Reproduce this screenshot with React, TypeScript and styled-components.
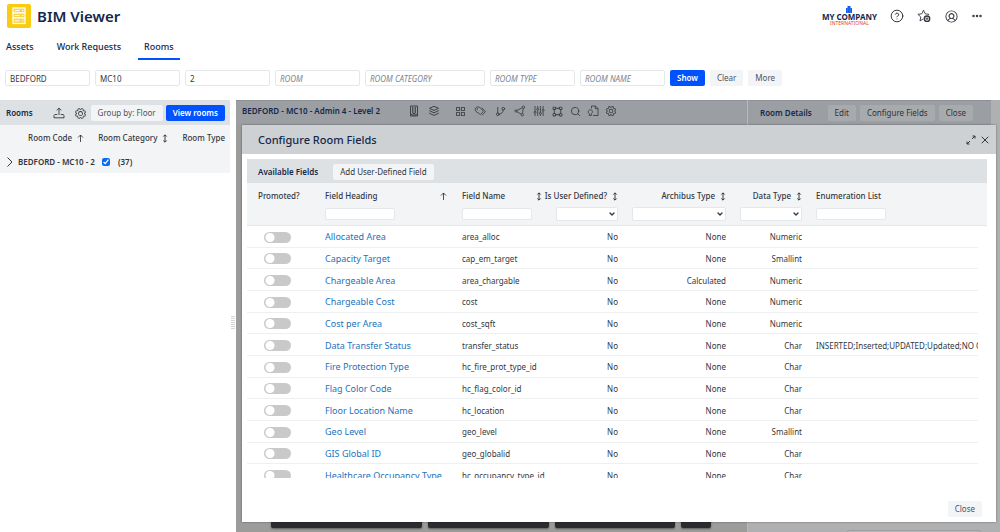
import React from "react";
import styled, { createGlobalStyle, css } from "styled-components";
import { ChevronDown, CircleHelp, Ellipsis, GitBranch, Search, X } from "lucide-react";
import { PiBoundingBox, PiGear, PiUserCircle, PiSquaresFour } from "react-icons/pi";

const color = {
  navy: "#14284b",
  text: "#33373d",
  muted: "#5c6670",
  blue: "#0052ff",
  link: "#2272bd",
  bar: "#dde1e4",
  pale: "#f2f4f6",
  line: "#e4e8ea",
  dimBar: "#9b9fa3",
  dimButton: "#a8abae",
};

const GlobalStyle = createGlobalStyle`
  * { box-sizing: border-box; }
  body {
    margin: 0;
    background: #fff;
    color: ${color.text};
    font: 9px/12px "Noto Sans", sans-serif;
  }
  button, input, select { font: inherit; margin: 0; }
`;

const Page = styled.div`
  display: flex;
  flex-direction: column;
  height: 100vh;
  overflow: hidden;
`;

const TopBar = styled.header`
  display: flex;
  align-items: center;
  justify-content: space-between;
  height: 32px;
  padding: 0 19px 0 7px;
`;

const Brand = styled.div`
  display: flex;
  align-items: center;
  gap: 6px;
`;

const Title = styled.h1`
  margin: 0;
  color: ${color.navy};
  font-size: 15px;
  line-height: 24px;
  font-weight: 600;
`;

const Tools = styled.div`
  display: flex;
  align-items: center;
  gap: 13px;
`;

const Company = styled.div`
  display: flex;
  flex-direction: column;
  align-items: center;
  color: ${color.navy};
  font-size: 8px;
  line-height: 8px;
  font-weight: 700;
`;

const CompanySub = styled.span`
  color: #e0402c;
  font-size: 5px;
  line-height: 5px;
  font-weight: 400;
`;

const IconButton = styled.button<{ $narrow?: boolean }>`
  display: grid;
  place-items: center;
  width: ${(p) => (p.$narrow ? 10 : 14)}px;
  height: 14px;
  padding: 0;
  border: 0;
  background: none;
  color: ${color.text};
`;

const Tabs = styled.nav`
  display: flex;
  gap: 11px;
  height: 28px;
  padding-top: 2px;
`;

const Tab = styled.a<{ $active?: boolean }>`
  padding: 7px 6px 0;
  height: 26px;
  border-bottom: 2px solid ${(p) => (p.$active ? color.blue : "transparent")};
  color: ${color.navy};
  font-size: 9px;
  font-weight: 500;
  text-decoration: none;
`;

const Filters = styled.form`
  display: flex;
  gap: 5px;
  padding: 10px 5px 14px;
`;

const field = css`
  border: 1px solid ${color.line};
  border-radius: 2px;
  background: #fff;
  color: ${color.text};
`;

const FilterInput = styled.input<{ $wide?: boolean }>`
  ${field}
  width: ${(p) => (p.$wide ? 120 : 85)}px;
  height: 16px;
  padding: 0 4px;
  font-size: 8px;
  &::placeholder { color: #7c858d; font-style: italic; opacity: 1; }
`;

const Button = styled.button<{ $kind?: "primary" | "dim" }>`
  height: 16px;
  padding: 0 7px;
  border: 0;
  border-radius: 2px;
  font-size: 8px;
  line-height: 16px;
  font-weight: ${(p) => (p.$kind === "primary" ? 600 : 400)};
  white-space: nowrap;
  background: ${(p) => (p.$kind === "primary" ? color.blue : p.$kind === "dim" ? color.dimButton : color.pale)};
  color: ${(p) => (p.$kind === "primary" ? "#fff" : p.$kind === "dim" ? "#2f3439" : "#4c555e")};
`;

const Workspace = styled.main`
  display: grid;
  grid-template-columns: 230px 6px minmax(0, 1fr);
  flex: 1;
  min-height: 0;
`;

const PanelBar = styled.div`
  display: flex;
  align-items: center;
  height: 25px;
  padding: 1px 5px 0 6px;
  gap: 3px;
  background: ${color.bar};
`;

const BarTitle = styled.h2`
  margin: 0;
  color: ${color.navy};
  font-size: 8px;
  line-height: 12px;
  font-weight: 600;
  white-space: nowrap;
`;

const BarIcons = styled.div`
  display: flex;
  gap: 8px;
  margin-left: auto;
`;

const RoomHead = styled.div`
  display: flex;
  justify-content: flex-end;
  gap: 14px;
  padding: 7px 5px 6px;
  background: ${color.pale};
  font-size: 8px;
  font-weight: 500;
  white-space: nowrap;
`;

const Sortable = styled.span`
  display: inline-flex;
  align-items: center;
  gap: 5px;
`;

const RoomGroup = styled.label`
  display: flex;
  align-items: center;
  gap: 5px;
  padding: 6px 7px 5px;
  background: ${color.pale};
  font-size: 8px;
  font-weight: 600;
`;

const CheckBox = styled.input`
  && { margin: 0 3px 0 2px; }
  width: 8px;
  height: 8px;
  accent-color: #0a6cf5;
`;

const Splitter = styled.div`
  display: grid;
  place-items: center;
  padding-top: 14px;
`;

const Grip = styled.div`
  width: 4px;
  height: 14px;
  background: repeating-linear-gradient(#d4d7da 0 1px, #fff 1px 2px);
`;

const Viewer = styled.div`
  position: relative;
  display: grid;
  grid-template-columns: minmax(0, 1fr) 253px;
  background: #9c9c9b;
`;

const Drawing = styled.section`
  display: flex;
  flex-direction: column;
  justify-content: space-between;
`;

const DrawingBar = styled.div`
  display: flex;
  align-items: center;
  gap: 27px;
  height: 25px;
  padding: 0 6px 4px;
  background: ${color.dimBar};
  border-top: 1px solid #8d9195;
`;

const DrawingTools = styled.div`
  display: flex;
  gap: 5px;
`;

const ToolGroup = styled.div<{ $gap: number; $apart?: boolean }>`
  display: flex;
  gap: ${(p) => p.$gap}px;
  margin-right: ${(p) => (p.$apart ? 7 : 0)}px;
`;

const Palette = styled.div`
  display: flex;
  gap: 6px;
  padding: 0 36px 4px 35px;
`;

const PaletteBar = styled.div<{ $grow: number }>`
  flex: ${(p) => p.$grow} 0 0;
  height: 22px;
  border-radius: 2px;
  background: #2a2c2f;
  box-shadow: 0 1px 2px rgba(0, 0, 0, 0.4);
`;

const Details = styled.section`
  display: flex;
  flex-direction: column;
  justify-content: space-between;
  background: #afb0b2;
  border-left: 1px solid #b6b9bb;
`;

const DetailsBar = styled.div`
  display: flex;
  align-items: center;
  gap: 4px;
  height: 25px;
  margin-right: 9px;
  padding: 0 18px 0 12px;
  background: ${color.dimBar};
  border-top: 1px solid #8d9195;
  ${BarTitle} { margin-right: auto; }
`;

const DetailsField = styled.input`
  align-self: flex-end;
  width: 134px;
  height: 16px;
  && { margin: 0 19px -14px 0; }
  border: 1px solid #9da0a3;
  border-radius: 2px;
  background: #b3b4b6;
`;

const Dialog = styled.div`
  position: absolute;
  inset: 25px 4px 10px 6px;
  display: flex;
  flex-direction: column;
  background: #fff;
  box-shadow: 0 0 2px rgba(0, 0, 0, 0.4);
`;

const DialogHead = styled.div`
  display: flex;
  align-items: center;
  height: 29px;
  padding: 0 4px 0 16px;
  background: #cdd1d4;
`;

const DialogTitle = styled.h2`
  margin: 0 auto 0 0;
  color: ${color.navy};
  font-size: 11px;
  line-height: 16px;
  font-weight: 500;
`;

const DialogBody = styled.div`
  flex: 1;
  min-height: 0;
  margin: 5px 9px 0 5px;
  overflow: hidden;
`;

const FieldsBar = styled.div`
  display: flex;
  align-items: center;
  gap: 15px;
  height: 24px;
  padding: 1px 11px 0;
  background: ${color.bar};
  ${Button} { color: ${color.text}; }
`;

const DialogFoot = styled.div`
  display: flex;
  justify-content: flex-end;
  padding: 23px 14px 5px;
`;

const Table = styled.table`
  display: block;
`;

const columns = css`
  display: grid;
  grid-template-columns: 78px 137px 85px 71px 108px 76px minmax(0, 1fr);
`;

const THead = styled.thead`
  display: block;
  background: ${color.pale};
`;

const HeadRow = styled.tr`
  ${columns}
  height: 43px;
  border-bottom: 1px solid ${color.line};
`;

const Th = styled.th<{ $right?: boolean; $inset?: number }>`
  display: flex;
  flex-direction: column;
  align-items: ${(p) => (p.$right ? "flex-end" : "stretch")};
  gap: 5px;
  padding: 7px 0 0 ${(p) => p.$inset ?? 0}px;
  font-size: 8px;
  font-weight: 500;
  text-align: left;
  white-space: nowrap;
`;

const HeadLabel = styled.span<{ $end?: number }>`
  display: flex;
  align-items: center;
  justify-content: space-between;
  gap: 5px;
  padding-right: ${(p) => p.$end ?? 0}px;
`;

const HeadInput = styled.input`
  ${field}
  width: 70px;
  height: 12px;
  && { margin-top: 1px; }
`;

const SelectBox = styled.span<{ $width: number }>`
  display: grid;
  align-items: center;
  width: ${(p) => p.$width}px;
  > * { grid-area: 1 / 1; }
  > svg { justify-self: end; margin-right: 2px; pointer-events: none; }
`;

const HeadSelect = styled.select`
  ${field}
  appearance: none;
  width: 100%;
  height: 14px;
  padding: 0 4px;
  font-size: 8px;
`;

const TBody = styled.tbody`
  display: grid;
  grid-auto-rows: 1fr;
  height: 260px;
  margin-right: 9px;
`;

const Row = styled.tr`
  ${columns}
  align-items: center;
  border-bottom: 1px solid #edeff0;
`;

const Td = styled.td<{ $right?: boolean; $inset?: number }>`
  padding: 2px 0 0 ${(p) => p.$inset ?? 0}px;
  overflow: hidden;
  font-size: 8px;
  text-align: ${(p) => (p.$right ? "right" : "left")};
  white-space: nowrap;
`;

const FieldLink = styled.a`
  color: ${color.link};
  font-size: 9px;
  text-decoration: none;
`;

const Toggle = styled.input`
  display: block;
  appearance: none;
  width: 27px;
  height: 11px;
  border-radius: 6px;
  background: radial-gradient(circle at 6px 50%, #fff 4px, #c9c9c9 5px);
`;

const BrandMark = () => (
  <svg width="24" height="24" viewBox="0 0 24 24" aria-hidden="true">
    <rect width="24" height="24" rx="2" fill="#facc0f" />
    <g fill="#fbd544" stroke="#fff" strokeWidth="1.200">
      <rect x="6" y="4" width="12" height="5" />
      <rect x="6" y="9" width="12" height="5" />
      <rect x="6" y="14" width="12" height="5.500" />
    </g>
    <path d="M8 6.500h4.500M8 11.500h4.500M8 16.800h4.500M15 6.500h1.300M15 11.500h1.300M15 16.800h1.300" stroke="#fff" />
  </svg>
);

const CompanyMark = () => (
  <svg width="8" height="7" viewBox="0 0 8 7" aria-hidden="true">
    <path d="M1 2h1.500V0h3v2H7v5H1z" fill="#0f5bf0" />
    <path d="M2.700 2v5M5.300 2v5" stroke="#7fa9ff" strokeWidth=".4" />
  </svg>
);

const StarAdd = () => (
  <svg width="14" height="14" viewBox="0 0 14 14" fill="none" stroke="currentColor" strokeWidth=".9" aria-hidden="true">
    <path d="M6.200 10L3 11.900l.8-3.900L.9 5.300l3.900-.5L6.500 1.200l1.700 3.600 3.600.5-.9.900" />
    <circle cx="10" cy="9.700" r="2.700" strokeWidth="1.400" />
    <path d="M10 8.300v2.800M8.600 9.700h2.800" />
  </svg>
);

const SortIcon = () => (
  <svg width="6" height="9" viewBox="0 0 6 9" fill="none" stroke="#22262b" strokeWidth=".9" aria-hidden="true">
    <path d="M3 1v7M1.300 2.500L3 .8l1.700 1.700M1.300 6.500L3 8.200l1.700-1.700" />
  </svg>
);

const SortedIcon = () => (
  <svg width="7" height="9" viewBox="0 0 7 9" fill="none" stroke="#22262b" strokeWidth=".8" aria-hidden="true">
    <path d="M3.500 1v7M1 3.500L3.500 1 6 3.500" />
  </svg>
);

const UploadIcon = () => (
  <svg width="12" height="12" viewBox="0 0 12 12" fill="none" stroke="currentColor" strokeWidth=".9" aria-hidden="true">
    <path d="M6 8V1.200M3.700 3.400L6 1.100l2.300 2.300M4.300 7.500H1.800L1 8.300v2.500h10V8.300l-.8-.8H7.700" />
  </svg>
);

const ExpandIcon = () => (
  <svg width="10" height="10" viewBox="0 0 10 10" fill="none" stroke="#22262b" strokeWidth=".9" aria-hidden="true">
    <path d="M6 4l3-3M6.500 1H9v2.500M4 6L1 9M1 6.500V9h2.500" />
  </svg>
);

const BuildingIcon = () => (
  <svg width="12" height="12" viewBox="0 0 12 12" fill="none" stroke="currentColor" aria-hidden="true">
    <path d="M2.500 1h7v10h-7zM5 11V8.500h2V11" strokeWidth=".9" />
    <path d="M4 3h1.400M6.600 3H8M4 5h1.400M6.600 5H8M4 7h1.400M6.600 7H8M3.800 9v1M8.200 9v1" strokeWidth="1.300" />
  </svg>
);

const LayersIcon = () => (
  <svg width="12" height="12" viewBox="0 0 12 12" fill="none" stroke="currentColor" strokeWidth=".9" strokeLinejoin="round" aria-hidden="true">
    <path d="M6 1.300l4.500 2L6 5.400l-4.500-2zM1.500 5.300v.4L6 7.800l4.500-2.100v-.4M1.500 7.800v.5L6 10.400l4.500-2.100v-.5" />
  </svg>
);

const TagsIcon = () => (
  <svg width="12" height="12" viewBox="0 0 12 12" fill="none" stroke="currentColor" strokeWidth=".8" strokeLinejoin="round" aria-hidden="true">
    <path d="M1.200 4.500c0-1.500 1-2.500 2.500-2.500l2 .2 3.700 4.100-2.900 3.300-4.700-3.300zM7.700 2.700l3.700 3.800-3.200 3.800" />
    <circle cx="3.200" cy="4" r=".4" />
  </svg>
);

const NetworkIcon = () => (
  <svg width="12" height="12" viewBox="0 0 12 12" fill="none" stroke="currentColor" strokeWidth=".8" aria-hidden="true">
    <path d="M2.800 5.500l5.400-2.700M9.300 3.400l-.8 5M2.900 6.700l4.400 2.500" />
    <circle cx="2" cy="6" r="1.100" />
    <circle cx="9.400" cy="2.200" r="1.200" />
    <circle cx="8.300" cy="9.700" r="1.200" />
  </svg>
);

const SlidersIcon = () => (
  <svg width="12" height="12" viewBox="0 0 12 12" fill="none" stroke="currentColor" strokeWidth=".8" aria-hidden="true">
    <path d="M2 1v5.200M2 8.400V11M4.700 1v2.200M4.700 5.400V11M7.400 1v6.200M7.400 9.400V11M10.100 1v3.200M10.100 6.400V11" />
    <circle cx="2" cy="7.300" r="1" />
    <circle cx="4.700" cy="4.300" r="1" />
    <circle cx="7.400" cy="8.300" r="1" />
    <circle cx="10.100" cy="5.300" r="1" />
  </svg>
);

const PageBulbIcon = () => (
  <svg width="12" height="12" viewBox="0 0 12 12" fill="none" stroke="currentColor" strokeWidth=".8" aria-hidden="true">
    <path d="M4.500 3.500V1h4L11 3.500v7H6M8.300 1v2.700H11" />
    <path d="M2.400 8.800C.4 7.500 1 4.800 3.300 4.800s3 2.700 1 4v1.700h-2V8.800" />
  </svg>
);

type ToolSet = { gap: number; apart?: boolean; tools: [string, React.ReactNode][] };

const drawingTools: ToolSet[] = [
  { gap: 6, apart: true, tools: [["Building", <BuildingIcon />], ["Layers", <LayersIcon />]] },
  {
    gap: 6,
    tools: [
      ["Views", <PiSquaresFour size={13} />],
      ["Labels", <TagsIcon />],
      ["Tree", <GitBranch size={11} strokeWidth={1.8} />],
      ["Network", <NetworkIcon />],
    ],
  },
  {
    gap: 4,
    tools: [
      ["Adjust", <SlidersIcon />],
      ["Bounds", <PiBoundingBox size={13} />],
      ["Search", <Search size={11} strokeWidth={1.8} />],
      ["Report", <PageBulbIcon />],
      ["Settings", <PiGear size={12} />],
    ],
  },
];

const rows = [
  ["Allocated Area", "area_alloc", "None", "Numeric"],
  ["Capacity Target", "cap_em_target", "None", "Smallint"],
  ["Chargeable Area", "area_chargable", "Calculated", "Numeric"],
  ["Chargeable Cost", "cost", "None", "Numeric"],
  ["Cost per Area", "cost_sqft", "None", "Numeric"],
  ["Data Transfer Status", "transfer_status", "None", "Char", "INSERTED;Inserted;UPDATED;Updated;NO CHANGE;No Change"],
  ["Fire Protection Type", "hc_fire_prot_type_id", "None", "Char"],
  ["Flag Color Code", "hc_flag_color_id", "None", "Char"],
  ["Floor Location Name", "hc_location", "None", "Char"],
  ["Geo Level", "geo_level", "None", "Smallint"],
  ["GIS Global ID", "geo_globalid", "None", "Char"],
  ["Healthcare Occupancy Type", "hc_occupancy_type_id", "None", "Char"],
];

const ColumnSelect = ({ width, label }: { width: number; label: string }) => (
  <SelectBox $width={width}>
    <HeadSelect aria-label={label}><option /></HeadSelect>
    <ChevronDown size={8} strokeWidth={4} />
  </SelectBox>
);

export default function App() {
  return (
    <Page>
      <GlobalStyle />
      <TopBar>
        <Brand>
          <BrandMark />
          <Title>BIM Viewer</Title>
        </Brand>
        <Tools>
          <Company>
            <CompanyMark />
            MY COMPANY
            <CompanySub>INTERNATIONAL</CompanySub>
          </Company>
          <IconButton aria-label="Help"><CircleHelp size={14} strokeWidth={1.7} /></IconButton>
          <IconButton aria-label="Add favorite"><StarAdd /></IconButton>
          <IconButton aria-label="Account"><PiUserCircle size={15} /></IconButton>
          <IconButton aria-label="More options" $narrow><Ellipsis size={12} strokeWidth={3} /></IconButton>
        </Tools>
      </TopBar>
      <Tabs>
        <Tab href="#assets">Assets</Tab>
        <Tab href="#requests">Work Requests</Tab>
        <Tab href="#rooms" $active>Rooms</Tab>
      </Tabs>
      <Filters onSubmit={(e) => e.preventDefault()}>
        <FilterInput aria-label="Site" defaultValue="BEDFORD" />
        <FilterInput aria-label="Building" defaultValue="MC10" />
        <FilterInput aria-label="Floor" defaultValue="2" />
        <FilterInput aria-label="Room" placeholder="ROOM" />
        <FilterInput aria-label="Room category" placeholder="ROOM CATEGORY" $wide />
        <FilterInput aria-label="Room type" placeholder="ROOM TYPE" />
        <FilterInput aria-label="Room name" placeholder="ROOM NAME" />
        <Button $kind="primary">Show</Button>
        <Button type="reset">Clear</Button>
        <Button type="button">More</Button>
      </Filters>
      <Workspace>
        <section>
          <PanelBar>
            <BarTitle>Rooms</BarTitle>
            <BarIcons>
              <IconButton aria-label="Export"><UploadIcon /></IconButton>
              <IconButton aria-label="Settings"><PiGear size={13} /></IconButton>
            </BarIcons>
            <Button>Group by: Floor</Button>
            <Button $kind="primary">View rooms</Button>
          </PanelBar>
          <RoomHead>
            <Sortable>Room Code <SortedIcon /></Sortable>
            <Sortable>Room Category <SortIcon /></Sortable>
            <span>Room Type</span>
          </RoomHead>
          <RoomGroup>
            <svg width="6" height="10" viewBox="0 0 6 10" fill="none" stroke="currentColor" aria-hidden="true">
              <path d="M.5.500L5 5 .5 9.500" />
            </svg>
            BEDFORD - MC10 - 2
            <CheckBox type="checkbox" defaultChecked />
            (37)
          </RoomGroup>
        </section>
        <Splitter><Grip /></Splitter>
        <Viewer>
          <Drawing>
            <DrawingBar>
              <BarTitle>BEDFORD - MC10 - Admin 4 - Level 2</BarTitle>
              <DrawingTools>
                {drawingTools.map(({ gap, apart, tools }) => (
                  <ToolGroup key={tools[0][0]} $gap={gap} $apart={apart}>
                    {tools.map(([name, glyph]) => (
                      <IconButton key={name} aria-label={name}>{glyph}</IconButton>
                    ))}
                  </ToolGroup>
                ))}
              </DrawingTools>
            </DrawingBar>
            <Palette>
              <PaletteBar $grow={151} />
              <PaletteBar $grow={120} />
              <PaletteBar $grow={120} />
              <PaletteBar $grow={30} />
            </Palette>
          </Drawing>
          <Details>
            <DetailsBar>
              <BarTitle>Room Details</BarTitle>
              <Button $kind="dim">Edit</Button>
              <Button $kind="dim">Configure Fields</Button>
              <Button $kind="dim">Close</Button>
            </DetailsBar>
            <DetailsField aria-label="Room detail" />
          </Details>
          <Dialog role="dialog" aria-label="Configure Room Fields">
            <DialogHead>
              <DialogTitle>Configure Room Fields</DialogTitle>
              <IconButton aria-label="Expand"><ExpandIcon /></IconButton>
              <IconButton aria-label="Close dialog"><X size={12} /></IconButton>
            </DialogHead>
            <DialogBody>
              <FieldsBar>
                <BarTitle>Available Fields</BarTitle>
                <Button>Add User-Defined Field</Button>
              </FieldsBar>
              <Table>
                <THead>
                  <HeadRow>
                    <Th $inset={11}>Promoted?</Th>
                    <Th>
                      <HeadLabel $end={15}>Field Heading <SortedIcon /></HeadLabel>
                      <HeadInput aria-label="Filter field heading" />
                    </Th>
                    <Th>
                      <HeadLabel $end={5}>Field Name <SortIcon /></HeadLabel>
                      <HeadInput aria-label="Filter field name" />
                    </Th>
                    <Th $right>
                      <HeadLabel>Is User Defined? <SortIcon /></HeadLabel>
                      <ColumnSelect width={62} label="Filter user defined" />
                    </Th>
                    <Th $right>
                      <HeadLabel>Archibus Type <SortIcon /></HeadLabel>
                      <ColumnSelect width={94} label="Filter Archibus type" />
                    </Th>
                    <Th $right>
                      <HeadLabel>Data Type <SortIcon /></HeadLabel>
                      <ColumnSelect width={62} label="Filter data type" />
                    </Th>
                    <Th $inset={14}>
                      <HeadLabel>Enumeration List</HeadLabel>
                      <HeadInput aria-label="Filter enumeration list" />
                    </Th>
                  </HeadRow>
                </THead>
                <TBody>
                  {rows.map(([heading, name, archibus, data, list]) => (
                    <Row key={name}>
                      <Td $inset={17}><Toggle type="checkbox" aria-label={`Promote ${heading}`} /></Td>
                      <Td><FieldLink href="#field">{heading}</FieldLink></Td>
                      <Td>{name}</Td>
                      <Td $right>No</Td>
                      <Td $right>{archibus}</Td>
                      <Td $right>{data}</Td>
                      <Td $inset={14}>{list}</Td>
                    </Row>
                  ))}
                </TBody>
              </Table>
            </DialogBody>
            <DialogFoot><Button>Close</Button></DialogFoot>
          </Dialog>
        </Viewer>
      </Workspace>
    </Page>
  );
}
